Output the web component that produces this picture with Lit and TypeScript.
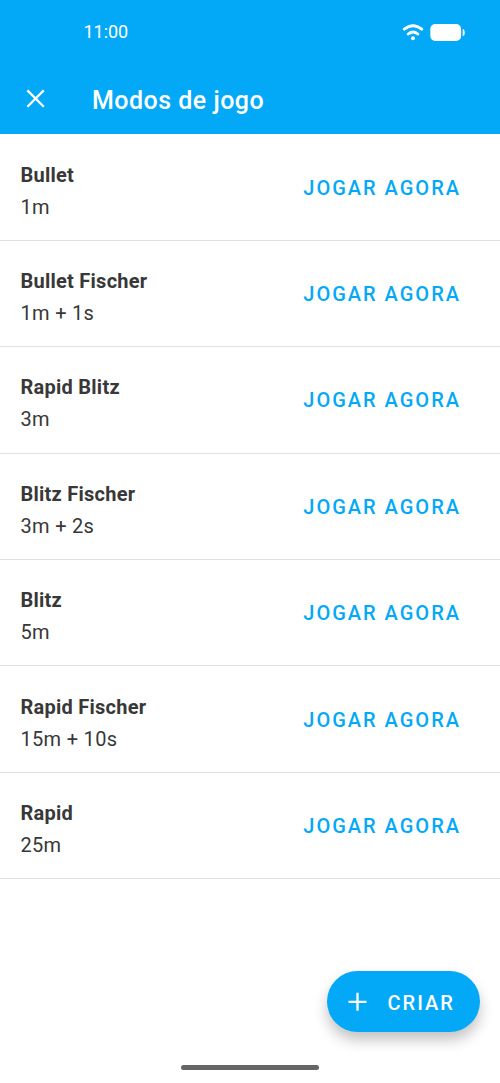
import { LitElement, html, css } from "lit";
import { customElement } from "lit/decorators.js";

interface Mode { name: string; time: string; }

const MODES: Mode[] = [
  { name: "Bullet", time: "1m" },
  { name: "Bullet Fischer", time: "1m + 1s" },
  { name: "Rapid Blitz", time: "3m" },
  { name: "Blitz Fischer", time: "3m + 2s" },
  { name: "Blitz", time: "5m" },
  { name: "Rapid Fischer", time: "15m + 10s" },
  { name: "Rapid", time: "25m" },
];

@customElement("app-root")
export class AppRoot extends LitElement {
  static styles = css`
    :host { display: block; position: relative; height: 1083px; overflow: hidden; background: #fff; font-family: Roboto, sans-serif; color: #383838; }
    * { box-sizing: border-box; }
    svg { display: block; }
    header { height: 134px; background: #03a9f7; color: #fff; }
    .status { height: 64px; display: flex; align-items: center; justify-content: space-between; padding: 0 35px 0 83.5px; font-size: 18px; }
    .clock { letter-spacing: -0.05px; padding-bottom: 1px; }
    .bar { height: 70px; display: flex; align-items: center; padding-left: 26px; }
    h1 { margin: 3px 0 0 46px; font-size: 25px; font-weight: 500; line-height: 30px; letter-spacing: 0.48px; }
    ul { margin: 0; padding: 0.4px 0 0; list-style: none; }
    li { height: 106.42px; display: flex; align-items: center; justify-content: space-between; padding: 1px 39px 0 20.5px; border-bottom: 1px solid #e0e0e0; }
    .name { font-size: 20px; font-weight: 700; line-height: 32px; padding-top: 7px; letter-spacing: 0.25px; }
    .time { font-size: 20px; line-height: 33px; letter-spacing: 0.3px; }
    button { border: 0; padding: 0; background: none; font: 500 20px/24px Roboto, sans-serif; letter-spacing: 2px; color: #03a9f7; }
    .fab { position: absolute; right: 20px; bottom: 51px; width: 153px; height: 61px; border-radius: 31px; background: #03a9f7; color: #fff; display: flex; align-items: center; gap: 20px; padding-left: 20.5px; box-shadow: 0 8px 14px rgba(0,0,0,.24); }
    .fab span { padding-top: 2px; }
    .home { position: absolute; left: 181px; bottom: 13px; width: 138px; height: 5px; border-radius: 3px; background: #666; }
  `;

  render() {
    return html`
      <header>
        <div class="status">
          <span class="clock">11:00</span>
          <svg width="63" height="20" viewBox="0 0 63 20" fill="none">
            <path d="M2.300 7.200Q11 0.200 19.700 7.200M6.200 12Q11 8 15.800 12" stroke="#fff" stroke-width="2.900" stroke-linecap="round"/>
            <circle cx="11" cy="16.300" r="2" fill="#fff"/>
            <rect x="28.300" y="2" width="30.800" height="17" rx="5" fill="#fff"/>
            <path d="M60.700 7Q62.700 7 62.700 10.500Q62.700 14 60.700 14Z" fill="#fff"/>
          </svg>
        </div>
        <div class="bar">
          <svg width="20" height="20" viewBox="0 0 20 20"><path d="M1.400 1.400L17.800 17.800M17.800 1.400L1.400 17.800" stroke="#fff" stroke-width="2.300"/></svg>
          <h1>Modos de jogo</h1>
        </div>
      </header>
      <ul>
        ${MODES.map((m) => html`<li>
          <div><div class="name">${m.name}</div><div class="time">${m.time}</div></div>
          <button>JOGAR AGORA</button>
        </li>`)}
      </ul>
      <button class="fab">
        <svg width="20" height="20" viewBox="0 0 20 20"><path d="M9.500 0.800V18.800M0.500 9.800H18.500" stroke="#fff" stroke-width="2.300"/></svg>
        <span>CRIAR</span>
      </button>
      <div class="home"></div>
    `;
  }
}
